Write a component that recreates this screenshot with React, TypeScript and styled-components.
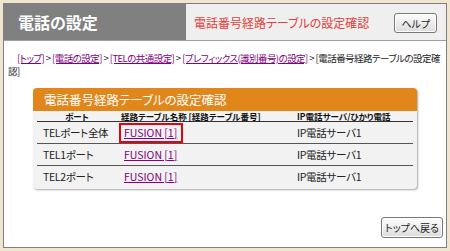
import React from 'react'
import styled, { createGlobalStyle } from 'styled-components'

const FONT = `"Noto Sans CJK JP", "Noto Sans", sans-serif`

const GlobalStyle = createGlobalStyle`
  html, body {
    margin: 0;
    padding: 0;
    background: #f0e6cf;
  }
  body {
    font-family: ${FONT};
    font-feature-settings: 'palt';
  }
`

const Frame = styled.div`
  margin: 3px 3px 0 3px;
  height: 245px;
  border: 1px solid #7f7f7f;
  background: #fff;
  display: flex;
  flex-direction: column;
  box-sizing: border-box;
`

const Header = styled.div`
  display: flex;
  height: 36px;
  border-bottom: 1px solid #a0a0a0;
`

const PageTitle = styled.div`
  width: 182px;
  background: #808080;
  color: #fff;
  font-size: 16px;
  font-weight: 700;
  display: flex;
  align-items: center;
  padding-left: 14px;
  box-sizing: border-box;
`

const SubBar = styled.div`
  flex: 1;
  background: #efefef;
  display: flex;
  align-items: center;
  justify-content: space-between;
  padding: 2px 9px 0 8px;
`

const SubTitle = styled.span`
  color: #e2403b;
  font-size: 12px;
  margin-top: -2px;
`

const Button = styled.button<{ $h?: number; $px?: number }>`
  font-family: ${FONT};
  font-feature-settings: 'palt';
  font-size: 10px;
  color: #222;
  height: ${({ $h }) => $h ?? 19}px;
  padding: 0 ${({ $px }) => $px ?? 6}px;
  border: 1px solid #777;
  border-radius: 3px;
  background: linear-gradient(#fdfdfd, #dcdcdc);
  box-shadow: inset 0 0 0 1px #fff;
  cursor: pointer;
`

const Body = styled.div`
  flex: 1;
  display: flex;
  flex-direction: column;
  padding: 11px 3px 9px 4px;
`

const Crumbs = styled.div`
  font-size: 9.5px;
  line-height: 13px;
  letter-spacing: -0.55px;
  color: #222;
  text-indent: 9px;
`

const Crumb = styled.a`
  color: #800080;
  text-decoration: underline;
`

const Current = styled.span`
  color: #222;
`

const Panel = styled.div`
  margin: 10px 26px 0 25px;
  background: #f2f2f2;
  border-radius: 4px;
  box-shadow: 1px 1px 2px rgba(0, 0, 0, 0.35);
  overflow: hidden;
  padding-bottom: 2px;
`

const PanelHead = styled.div`
  background: #e0861b;
  color: #fff;
  font-size: 12.5px;
  height: 23px;
  display: flex;
  align-items: center;
  padding-left: 11px;
`

const Table = styled.table`
  width: calc(100% - 8px);
  margin: 0 4px;
  border-collapse: collapse;
  table-layout: fixed;
`

const Th = styled.th<{ $center?: boolean; $w?: number }>`
  width: ${({ $w }) => ($w ? `${$w}px` : 'auto')};
  font-size: 8.5px;
  font-weight: 700;
  text-align: ${({ $center }) => ($center ? 'center' : 'left')};
  padding: 1px 0 0 ${({ $center }) => ($center ? 0 : 4)}px;
  height: 9px;
  line-height: 9px;
  white-space: nowrap;
  border-bottom: 1px solid #333;
  color: #111;
`

const Td = styled.td<{ $pad?: number }>`
  font-size: 10.5px;
  letter-spacing: -0.3px;
  height: 21px;
  white-space: nowrap;
  padding: 0 0 0 ${({ $pad }) => $pad ?? 4}px;
  border-top: 1px solid #555;
  color: #222;
  tr:first-child > & {
    border-top: none;
  }
`

const RouteLink = styled.a<{ $marked?: boolean }>`
  display: inline-block;
  color: #800080;
  text-decoration: underline;
  letter-spacing: 0;
  padding: 1px 4px 1px 3px;
  margin-left: -5px;
  border: 2px solid ${({ $marked }) => ($marked ? '#e60012' : 'transparent')};
  line-height: 14px;
`

const Footer = styled.div`
  margin-top: auto;
  display: flex;
  justify-content: flex-end;
`

const crumbs = ['[トップ]', '[電話の設定]', '[TELの共通設定]', '[プレフィックス(識別番号)の設定]']

const rows = [
  { port: 'TELポート全体', marked: true },
  { port: 'TEL1ポート', marked: false },
  { port: 'TEL2ポート', marked: false },
]

export default function App() {
  return (
    <>
      <GlobalStyle />
      <Frame>
        <Header>
          <PageTitle>電話の設定</PageTitle>
          <SubBar>
            <SubTitle>電話番号経路テーブルの設定確認</SubTitle>
            <Button $h={20}>ヘルプ</Button>
          </SubBar>
        </Header>

        <Body>
          <Crumbs>
            {crumbs.map((crumb) => (
              <React.Fragment key={crumb}>
                <Crumb>{crumb}</Crumb>
                {' > '}
              </React.Fragment>
            ))}
            <Current>[電話番号経路テーブルの設定確</Current>
            <Current>認]</Current>
          </Crumbs>

          <Panel>
            <PanelHead>電話番号経路テーブルの設定確認</PanelHead>
            <Table>
              <thead>
                <tr>
                  <Th $center $w={80}>ポート</Th>
                  <Th $w={172}>経路テーブル名称 [経路テーブル番号]</Th>
                  <Th>IP電話サーバ/ひかり電話</Th>
                </tr>
              </thead>
              <tbody>
                {rows.map((row) => (
                  <tr key={row.port}>
                    <Td $pad={6}>{row.port}</Td>
                    <Td $pad={7}>
                      <RouteLink $marked={row.marked}>FUSION [1]</RouteLink>
                    </Td>
                    <Td>IP電話サーバ1</Td>
                  </tr>
                ))}
              </tbody>
            </Table>
          </Panel>

          <Footer>
            <Button $h={21} $px={3}>トップへ戻る</Button>
          </Footer>
        </Body>
      </Frame>
    </>
  )
}
